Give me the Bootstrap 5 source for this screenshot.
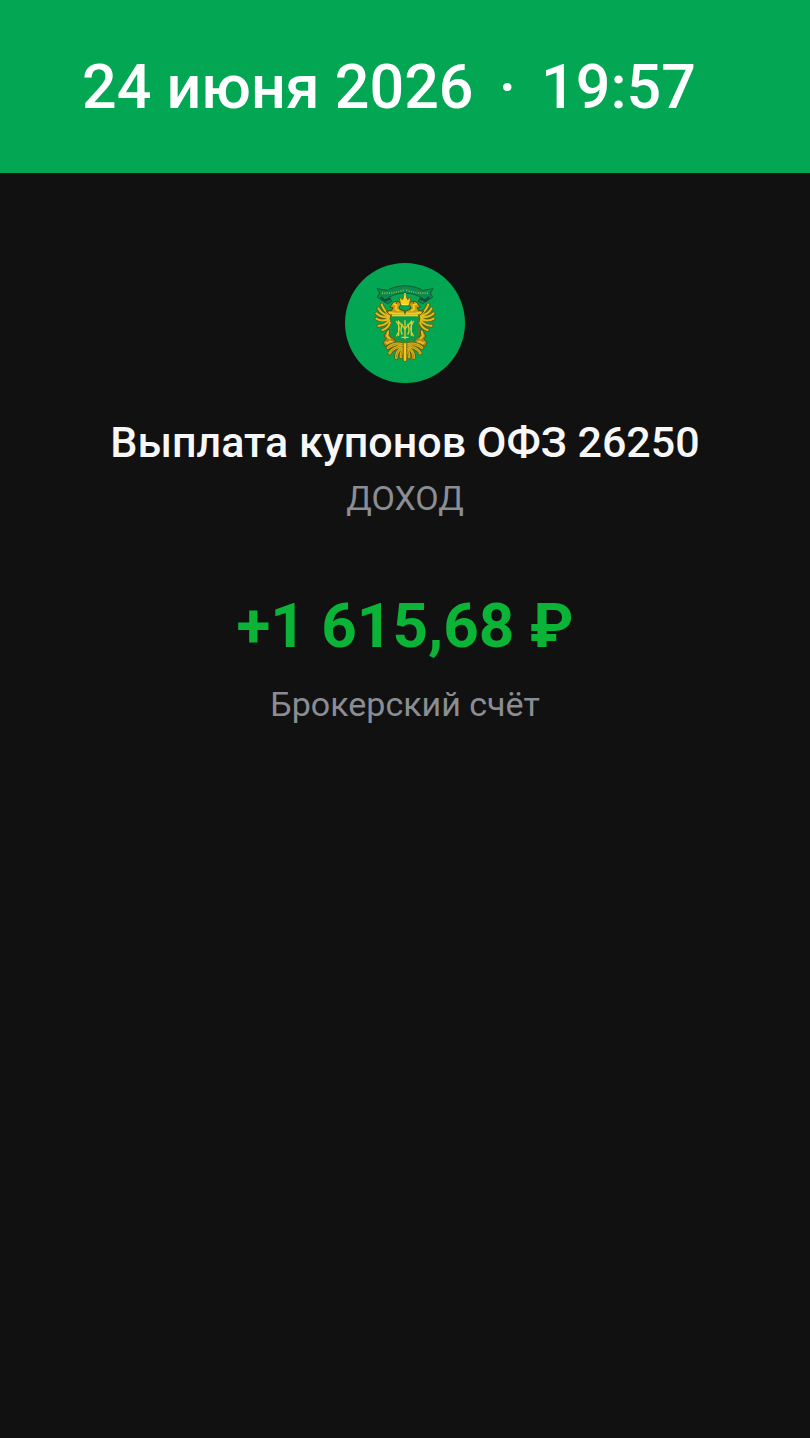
<!DOCTYPE html>
<html lang="ru">
<head>
<meta charset="utf-8">
<meta name="viewport" content="width=device-width, initial-scale=1">
<title>Выплата купонов ОФЗ 26250</title>
<link href="https://cdn.jsdelivr.net/npm/bootstrap@5.3.0/dist/css/bootstrap.min.css" rel="stylesheet">
<style>
body{background:#111;color:#f7f7f8;font-family:Roboto,Inter,sans-serif}
.top-bar{background:#03a653;color:#fff;padding:42px 82px 41px}
.op-date{font-size:61px;line-height:90px}
.op-dot{margin:0 10px}
.op-main{padding-top:90px}
.op-logo{width:120px;height:120px;margin-bottom:29px}
.op-title{font-size:43px;line-height:60px}
.op-note{font-size:34px;line-height:52px;color:#8b8d94}
.op-sum{font-size:62px;line-height:80px;color:#0bb436;margin:62px 0 12px}
</style>
</head>
<body>
<header class="top-bar">
  <h1 class="op-date m-0 fw-medium text-nowrap">24 июня 2026 <span class="op-dot">·</span> 19:57</h1>
</header>
<main class="op-main d-flex flex-column align-items-center text-center">
  <svg class="op-logo" viewBox="15 13 360 360" role="img" aria-label="Герб Минфина">
    <defs>
      <path id="feathers" d="M150 168Q132 158 125 137M148 172Q125 168 115 149M147 176Q124 178 109 164M147 181Q126 190 109 180M148 186Q133 202 115 201M150 192Q143 211 127 214"/>
      <path id="plumes" d="M190 258Q165 250 144 267M190 262Q160 264 149 283M191 264Q168 276 169 297M193 264Q182 282 183 295"/>
      <g id="half" stroke-linejoin="round" stroke-linecap="round">
        <!-- ribbon -->
        <path d="M195 81Q160 83 142 95L111 90 119 103 112 116 130 127 142 135 155 128 148 115Q168 103 195 103" fill="#0c8a4a" stroke="#0a5b38" stroke-width="3"/>
        <path d="M126 103Q160 106 195 93" fill="none" stroke="#7fbd62" stroke-width="5" stroke-dasharray="3 4" stroke-linecap="butt"/>
        <path d="M124 117l10 9 14-6" fill="none" stroke="#0c4e43" stroke-width="7"/>
        <!-- wing -->
        <use href="#feathers" fill="none" stroke="#57600f" stroke-width="11"/>
        <use href="#feathers" fill="none" stroke="#e3bb1c" stroke-width="6"/>
        <!-- head and shoulder -->
        <path d="M193 157L178 151Q174 143 184 138L176 129Q162 125 156 136L149 145 159 147 155 155 139 158 150 170 194 171Z" fill="#c79d12" stroke="#4d5310" stroke-width="3"/>
        <path d="M161 136l9 3-3 12 9 5M148 162l19 3 24-1" fill="none" stroke="#f2cd25" stroke-width="5"/>
        <circle cx="170" cy="133" r="2" fill="#39440f"/>
        <!-- leg -->
        <path d="M146 211L137 222 132 232 139 241 128 251 136 264 149 256 154 261 167 248 158 238 151 234Z" fill="#a98b14" stroke="#585611" stroke-width="3"/>
        <path d="M145 218l-4 14 8 8M138 251l5 4 7-7 7 2" fill="none" stroke="#e8c026" stroke-width="5"/>
        <!-- tail -->
        <use href="#plumes" fill="none" stroke="#5f5f10" stroke-width="13"/>
        <use href="#plumes" fill="none" stroke="#dfb61d" stroke-width="8"/>
        <use href="#plumes" fill="none" stroke="#8f7a14" stroke-width="2"/>
      </g>
    </defs>
    <circle cx="195" cy="193" r="180" fill="#03a653"/>
    <use href="#half"/>
    <use href="#half" transform="matrix(-1 0 0 1 390 0)"/>
    <path d="M195 252V302" stroke="#5f5f10" stroke-width="13" stroke-linecap="round"/>
    <path d="M195 252V303" stroke="#f0c922" stroke-width="8" stroke-linecap="round"/>
    <!-- crown -->
    <path d="M177 114l10 9 8-18 8 18 10-9-5 26h-26z" fill="#f7d021" stroke="#6d6713" stroke-width="3" stroke-linejoin="round"/>
    <path d="M195 103v13M186 138h18" stroke="#ffe34d" stroke-width="4"/>
    <!-- shield and monogram -->
    <path d="M154 169H236V225Q236 239 219 243Q204 246 195 253Q186 246 171 243Q154 239 154 225Z" fill="#079b4e" stroke="#54801f" stroke-width="3"/>
    <path d="M156 170H234" stroke="#f3cd22" stroke-width="6"/>
    <g fill="none" stroke="#dccd34" stroke-width="4">
      <path d="M169 187Q186 210 169 233M221 187Q204 210 221 233M176 231V189L195 211 214 189V231"/>
      <path d="M195 185V242M187 195Q179 214 187 228M203 195Q211 214 203 228M184 236H206"/>
    </g>
  </svg>
  <h2 class="op-title m-0">Выплата купонов ОФЗ 26250</h2>
  <p class="op-note m-0">ДОХОД</p>
  <p class="op-sum fw-bold">+1 615,68 ₽</p>
  <p class="op-note m-0">Брокерский счёт</p>
</main>
<script src="https://cdn.jsdelivr.net/npm/bootstrap@5.3.0/dist/js/bootstrap.bundle.min.js"></script>
</body>
</html>
